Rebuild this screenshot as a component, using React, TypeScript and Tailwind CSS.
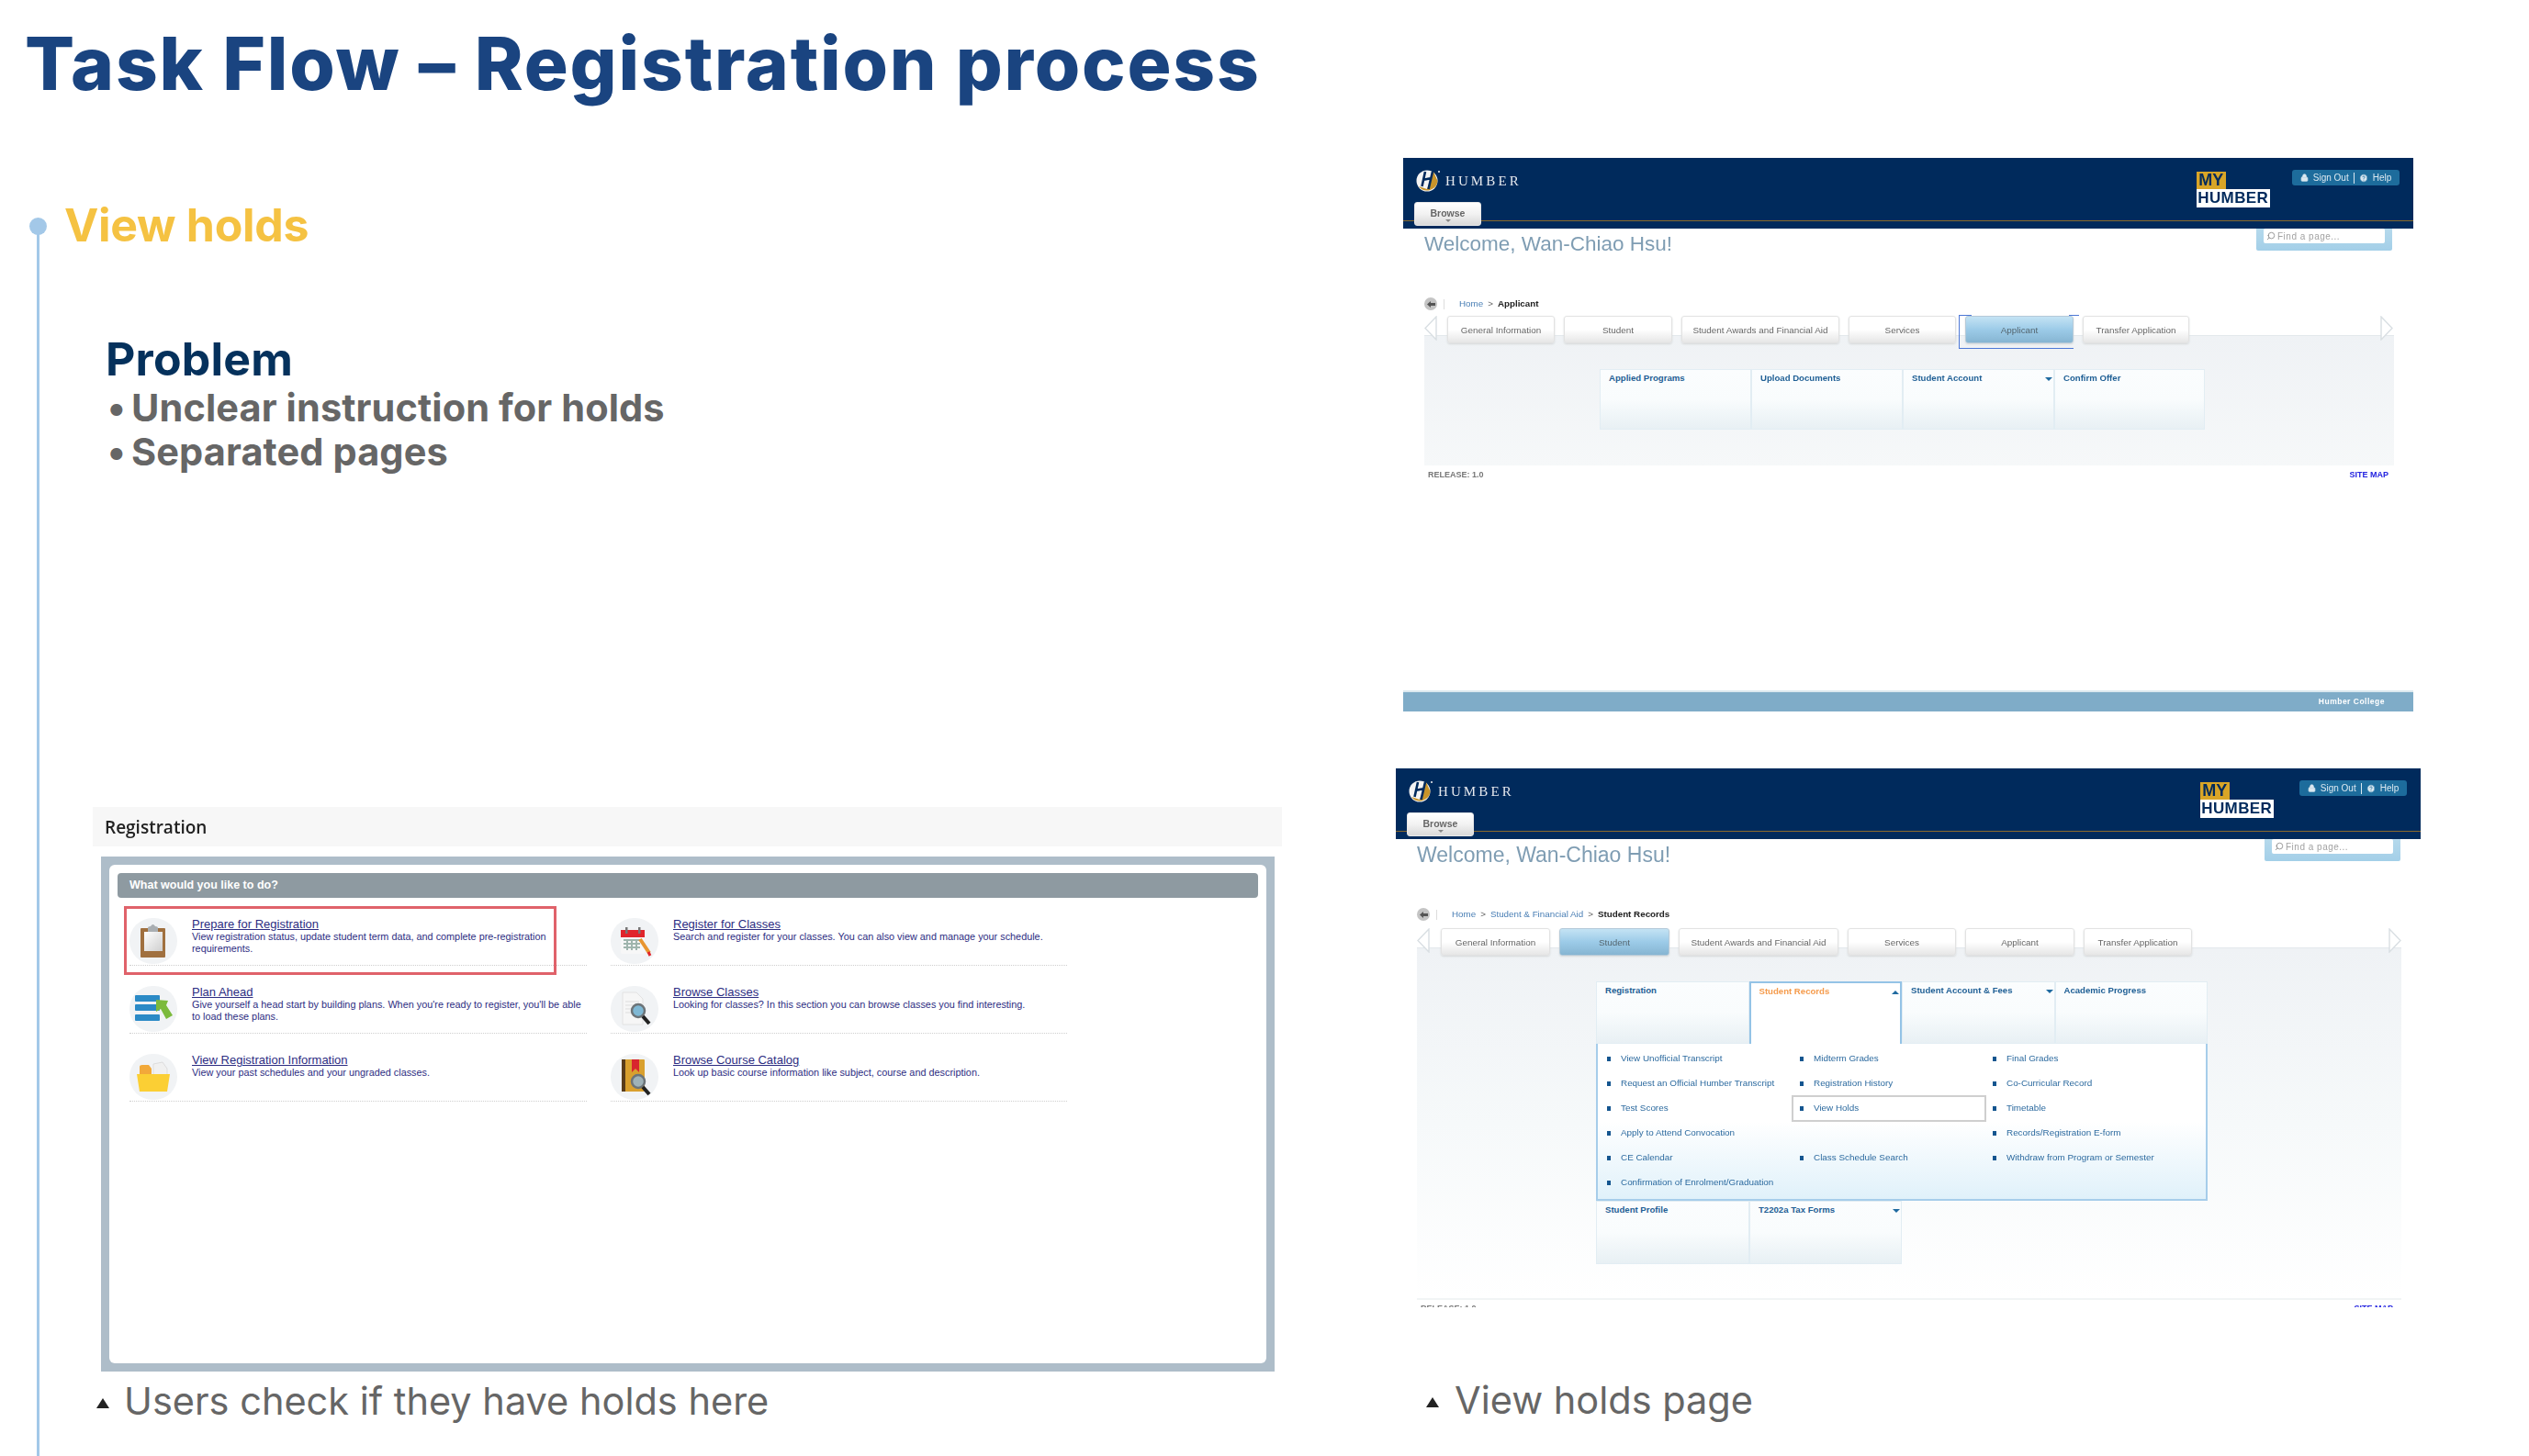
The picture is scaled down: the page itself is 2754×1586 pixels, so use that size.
import React from "react";
import { Lock, Search, CircleHelp } from "lucide-react";

const arial = "font-['Liberation_Sans',Arial,sans-serif]";
const display = "font-['Inter',sans-serif]";

function HumberLogo() {
  return (
    <svg width="26" height="26" viewBox="0 0 26 26" className="shrink-0">
      <circle cx="12" cy="13" r="11.5" fill="#f4f4f4" />
      <path d="M3 19 A11.5 11.5 0 0 0 23.5 13 L19 3 L12 22 Z" fill="#c8942a" />
      <path d="M10 3 L6.5 19 M18 3 L13.5 22 M7 12 L17 10" stroke="#002a5c" strokeWidth="2.6" fill="none" />
      <circle cx="25" cy="3" r="1" fill="#f4f4f4" />
    </svg>
  );
}

function Header({ myLeft }: { myLeft: string }) {
  return (
    <div className="relative h-[77px] bg-[#002a5c] flex flex-col">
      <div className="absolute left-0 right-0 top-[68px] h-px bg-[#8a6a2c]" />
      <div className="flex items-start h-[48px] pl-[14px] pr-[15px] pt-[12px]">
        <HumberLogo />
        <span className="ml-[6px] mt-[4px] font-['Liberation_Serif',serif] text-[15px] leading-[18px] tracking-[3.1px] text-[#e6e9ee]">HUMBER</span>
        <div className={`${myLeft} mt-[3px] flex flex-col items-start`}>
          <span className={`${arial} bg-[#d9a527] text-[#002a5c] font-bold text-[18px] leading-[19px] w-[32px] text-center`}>MY</span>
          <span className={`${arial} bg-white text-[#002a5c] font-bold text-[17px] leading-[20px] w-[80px] text-center tracking-[0.4px]`}>HUMBER</span>
        </div>
        <div className={`${arial} ml-auto mt-[1px] h-[17px] w-[117px] rounded-[3px] bg-[#1d6c9c] flex items-center justify-center gap-[5px] text-[10px] text-[#dbe8f0]`}>
          <Lock size={9} fill="#dbe8f0" strokeWidth={2} />
          <span>Sign Out</span>
          <span className="h-[12px] w-px bg-[#dbe8f0]" />
          <CircleHelp size={10} fill="#dbe8f0" stroke="#1d6c9c" />
          <span>Help</span>
        </div>
      </div>
      <div className="relative pl-[12px]">
        <div className={`${arial} w-[73px] h-[26px] rounded-[3px] bg-linear-to-b from-white via-[#f2f2f2] to-[#d9d9d9] text-[#666] text-[10.5px] font-bold flex flex-col items-center pt-[6px] leading-[11px] border border-[#e8e8e8]`}>
          Browse
          <span className="mt-[1px] w-0 h-0 border-x-[3px] border-x-transparent border-t-[3px] border-t-[#888]" />
        </div>
      </div>
    </div>
  );
}

function WelcomeRow({ pr, size }: { pr: string; size: string }) {
  return (
    <div className={`flex items-start justify-between ${pr}`}>
      <span className={`${arial} ${size} leading-[34px] text-[#7f9db3]`}>Welcome, Wan-Chiao Hsu!</span>
      <div className="w-[148px] h-[24px] bg-linear-to-b from-[#b5d9ec] to-[#a3cfe8] rounded-b-[2px] px-[8px]">
        <div className={`${arial} h-[16px] bg-white rounded-[2px] flex items-center pl-[3px] gap-[2px] text-[10px] tracking-[0.5px] text-[#a2a2a2]`}>
          <Search size={10} className="-scale-x-100" stroke="#888" />
          Find a page...
        </div>
      </div>
    </div>
  );
}

function Crumbs({ items, current }: { items: string[]; current: string }) {
  return (
    <div className={`${arial} flex items-center h-[14px] text-[9.8px]`}>
      <span className="w-[14px] h-[14px] rounded-full bg-[#c4c4c4] flex items-center justify-center">
        <svg width="9" height="7" viewBox="0 0 9 7"><path d="M0 3.5 L4 0 V2 H9 V5 H4 V7 Z" fill="#555" /></svg>
      </span>
      <span className="ml-[7px] h-[11px] w-px bg-[#ddd]" />
      <div className="ml-[16px] flex items-center gap-[5px] text-[#4a7fb5]">
        {items.map((t) => (
          <React.Fragment key={t}>
            <span>{t}</span>
            <span className="text-[#666]">&gt;</span>
          </React.Fragment>
        ))}
        <span className="font-bold text-[#222]">{current}</span>
      </div>
    </div>
  );
}

function Tab({ label, w, active, focus }: { label: string; w: string; active?: boolean; focus?: boolean }) {
  return (
    <div
      className={`${arial} relative ${w} h-[30px] pt-[2px] rounded-[3px] border text-[9.9px] flex items-center justify-center shadow-[0_1px_2px_#d5d8da] ${
        active
          ? "border-[#b5cad9] bg-linear-to-b from-[#c4e3f4] via-[#9ccbe8] to-[#86b5d2] text-[#55666f]"
          : "border-[#e2e2e2] bg-linear-to-b from-white via-white to-[#e6e6e6] text-[#666]"
      }`}
    >
      {label}
      {focus && (
        <>
          <span className="absolute left-[-8px] top-[-2px] bottom-[-7px] w-[125px] border-l border-b border-[#4d78d6]" />
          <span className="absolute left-[-8px] top-[-2px] w-[14px] h-px bg-[#4d78d6]" />
          <span className="absolute right-[-7px] top-[-2px] w-[11px] h-px bg-[#4d78d6]" />
        </>
      )}
    </div>
  );
}

function Arrow({ dir }: { dir: "l" | "r" }) {
  return (
    <svg width="14" height="27" viewBox="0 0 14 27" className="shrink-0">
      <path d={dir === "l" ? "M13 1 L1 13.5 L13 26 Z" : "M1 1 L13 13.5 L1 26 Z"} fill="#fff" stroke="#d9dfe3" strokeWidth="1.4" />
    </svg>
  );
}

function Tile({ label, caret, active }: { label: string; caret?: "down" | "up"; active?: boolean }) {
  return (
    <div
      className={`${arial} relative h-full pl-[9px] pt-[3px] text-[9.6px] leading-[11px] font-bold ${
        active
          ? "bg-white border-x-2 border-t-2 border-[#94c3e6] text-[#f59b4c]"
          : "bg-linear-to-b from-[#fbfdfe] via-[#f9fcfd] to-[#e8f0f4] border border-[#e2edf3] text-[#1f5f95]"
      }`}
    >
      {label}
      {caret === "down" && <span className="absolute right-[1px] top-[8px] w-0 h-0 border-x-[4px] border-x-transparent border-t-[4px] border-t-[#1f6aa0]" />}
      {caret === "up" && <span className="absolute right-[1px] top-[8px] w-0 h-0 border-x-[4px] border-x-transparent border-b-[4px] border-b-[#1f6aa0]" />}
    </div>
  );
}

function ScreenA() {
  const tabs: [string, string][] = [
    ["General Information", "w-[117px]"],
    ["Student", "w-[118px]"],
    ["Student Awards and Financial Aid", "w-[172px]"],
    ["Services", "w-[117px]"],
  ];
  return (
    <div className="ml-[8px] w-[1100px] blur-[0.4px]">
      <Header myLeft="ml-[735px]" />
      <div className="pl-[23px]">
        <WelcomeRow pr="pr-[23px]" size="text-[22.5px]" />
        <div className="mt-[41px]"><Crumbs items={["Home"]} current="Applicant" /></div>
        <div className="relative z-10 mt-[6px] w-[1056px] flex items-start">
          <Arrow dir="l" />
          <div className="ml-[11px] flex gap-[10px]">
            {tabs.map(([l, w]) => <Tab key={l} label={l} w={w} />)}
            <Tab label="Applicant" w="w-[118px]" active focus />
            <Tab label="Transfer Application" w="w-[116px]" />
          </div>
          <div className="ml-auto mr-[1px]"><Arrow dir="r" /></div>
        </div>
        <div className="-mt-[9px] w-[1056px] h-[142px] bg-linear-to-b from-[#eff2f5] to-[#f6f8f9] border-t border-[#e3e8ec] pt-[36px] pl-[191px]">
          <div className="grid grid-cols-[165px_165px_165px_164px] h-[66px]">
            <Tile label="Applied Programs" />
            <Tile label="Upload Documents" />
            <Tile label="Student Account" caret="down" />
            <Tile label="Confirm Offer" />
          </div>
        </div>
        <div className={`${arial} w-[1056px] flex justify-between px-[4px] mt-[5px] text-[9px] leading-[10px] font-bold`}>
          <span className="text-[#777]">RELEASE: 1.0</span>
          <span className="text-[#2323e0] mr-[2px]">SITE MAP</span>
        </div>
      </div>
      <div className={`${arial} mt-[230px] h-[23px] bg-[#7facc8] border-t-2 border-[#dbe8ef] flex items-center justify-end pr-[31px] text-[8.5px] font-bold tracking-[0.5px] text-white`}>
        Humber College
      </div>
    </div>
  );
}

function MenuItem({ label, selected }: { label?: string; selected?: boolean }) {
  if (!label) return <div className="h-[27px]" />;
  return (
    <div className={`${arial} h-[27px] pl-[8px] flex items-center text-[9.9px] text-[#2c6a9f] ${selected ? "outline-2 -outline-offset-1 outline-[#cfcfcf]" : ""}`}>
      <span className="w-[4px] h-[5px] bg-[#14558f]" />
      <span className="ml-[11px] whitespace-nowrap">{label}</span>
    </div>
  );
}

function ScreenB() {
  const tabs: [string, string, boolean?][] = [
    ["General Information", "w-[119px]"],
    ["Student", "w-[120px]", true],
    ["Student Awards and Financial Aid", "w-[174px]"],
    ["Services", "w-[118px]"],
    ["Applicant", "w-[119px]"],
    ["Transfer Application", "w-[118px]"],
  ];
  const rows: [string?, string?, string?][] = [
    ["View Unofficial Transcript", "Midterm Grades", "Final Grades"],
    ["Request an Official Humber Transcript", "Registration History", "Co-Curricular Record"],
    ["Test Scores", "View Holds", "Timetable"],
    ["Apply to Attend Convocation", undefined, "Records/Registration E-form"],
    ["CE Calendar", "Class Schedule Search", "Withdraw from Program or Semester"],
    ["Confirmation of Enrolment/Graduation", undefined, undefined],
  ];
  return (
    <div className="mt-[62px] w-[1116px] blur-[0.4px]">
      <Header myLeft="ml-[747px]" />
      <div className="pl-[23px]">
        <WelcomeRow pr="pr-[22px]" size="text-[23px]" />
        <div className="mt-[41px]"><Crumbs items={["Home", "Student & Financial Aid"]} current="Student Records" /></div>
        <div className="relative z-10 mt-[8px] w-[1072px] flex items-start">
          <Arrow dir="l" />
          <div className="ml-[12px] flex gap-[10px]">
            {tabs.map(([l, w, a]) => <Tab key={l} label={l} w={w} active={a} />)}
          </div>
          <div className="ml-auto"><Arrow dir="r" /></div>
        </div>
        <div className="-mt-[9px] w-[1072px] h-[384px] bg-linear-to-b from-[#eff2f5] via-[#f6f9fa] to-white border-t border-[#e3e8ec] border-b-2 border-b-[#f1f4f5] pt-[36px] pl-[195px]">
          <div className="w-[666px]">
            <div className="grid grid-cols-4 h-[68px]">
              <Tile label="Registration" />
              <Tile label="Student Records" caret="up" active />
              <Tile label="Student Account & Fees" caret="down" />
              <Tile label="Academic Progress" />
            </div>
            <div className="h-[171px] bg-linear-to-b from-white via-white to-[#e0f1fa] border-x-2 border-b-2 border-[#a6cdea] pl-[2px] pt-[3px] grid grid-cols-[210px_210px_240px] content-start">
              {rows.map((r, i) => (
                <React.Fragment key={i}>
                  <MenuItem label={r[0]} />
                  <MenuItem label={r[1]} selected={r[1] === "View Holds"} />
                  <MenuItem label={r[2]} />
                </React.Fragment>
              ))}
            </div>
            <div className="grid grid-cols-[167px_166px] h-[69px]">
              <Tile label="Student Profile" />
              <Tile label="T2202a Tax Forms" caret="down" />
            </div>
          </div>
        </div>
        <div className={`${arial} w-[1072px] h-[4px] overflow-hidden flex justify-between px-[4px] mt-[4px] text-[9px] leading-[10px] font-bold`}>
          <span className="text-[#777]">RELEASE: 1.0</span>
          <span className="text-[#2323e0] mr-[5px]">SITE MAP</span>
        </div>
      </div>
    </div>
  );
}

function Caption({ text, tri, gap }: { text: string; tri: string; gap: string }) {
  return (
    <div className={`${tri} flex items-center h-[48px]`}>
      <span className="mt-[4px] w-0 h-0 border-x-[7px] border-x-transparent border-b-[11px] border-b-[#222]" />
      <span className={`${gap} ${display} text-[41.5px] leading-[48px] text-[#666] whitespace-nowrap`}>{text}</span>
    </div>
  );
}

const iconBox = "w-[52px] h-[50px] shrink-0 rounded-full bg-[#f1f3f5] flex items-center justify-center";

function IconClipboard() {
  return (
    <svg width="34" height="40" viewBox="0 0 34 40">
      <defs>
        <linearGradient id="paper" x1="0" y1="0" x2="1" y2="1">
          <stop offset="0" stopColor="#ffffff" />
          <stop offset="1" stopColor="#cfcfcf" />
        </linearGradient>
      </defs>
      <rect x="3" y="6" width="27" height="32" rx="1" fill="#a0703f" />
      <rect x="7" y="10" width="20" height="21" fill="url(#paper)" />
      <path d="M11 10 L11 6 Q11 4 14 4 Q16.5 0 19 4 Q22 4 22 6 L22 10 Z" fill="#a9aeb2" />
    </svg>
  );
}
function IconCalendar() {
  return (
    <svg width="40" height="40" viewBox="0 0 40 40">
      <rect x="5" y="8" width="26" height="26" rx="2" fill="#f7f7f7" />
      <rect x="5" y="8" width="26" height="8" fill="#e0252b" />
      <rect x="10" y="5" width="2.5" height="7" fill="#777" />
      <rect x="24" y="5" width="2.5" height="7" fill="#777" />
      <path d="M8 19h18M8 23h18M8 27h18M12 18v12M17 18v12M22 18v12" stroke="#9fb5ad" strokeWidth="2" />
      <path d="M26 18 L36 33" stroke="#e89530" strokeWidth="4" />
      <path d="M35 32 L37 36" stroke="#e0252b" strokeWidth="3" />
    </svg>
  );
}
function IconPlan() {
  return (
    <svg width="44" height="36" viewBox="0 0 44 36">
      <rect x="2" y="3" width="27" height="7" rx="1" fill="#2b8ac6" />
      <rect x="2" y="13" width="27" height="7" rx="1" fill="#2b8ac6" />
      <rect x="2" y="24" width="27" height="7" rx="1" fill="#2b8ac6" />
      <path d="M25 8 L38 9 L36 14 L43 25 L36 29 L30 18 L25 21 Z" fill="#7cba3c" />
    </svg>
  );
}
function IconDoc() {
  return (
    <svg width="40" height="42" viewBox="0 0 40 42">
      <path d="M7 3 H22 L29 10 V38 H7 Z" fill="#f6f6f6" stroke="#e2e2e2" />
      <path d="M10 13h15M10 17h15M10 21h12M10 25h10" stroke="#ddd" />
      <circle cx="24" cy="23" r="7" fill="#7fb8d4" stroke="#6d7478" strokeWidth="2.5" />
      <path d="M29 29 L36 37" stroke="#222" strokeWidth="4" />
    </svg>
  );
}
function IconFolder() {
  return (
    <svg width="40" height="34" viewBox="0 0 40 34">
      <path d="M5 6 Q5 4 8 4 H15 L18 8 V16 H5 Z" fill="#f2a93a" />
      <path d="M20 3 L30 1 L35 8 L35 18 L20 18 Z" fill="#f0f0f0" stroke="#ddd" />
      <path d="M2 14 H38 L35 33 H5 Z" fill="#fbcf34" />
    </svg>
  );
}
function IconBook() {
  return (
    <svg width="40" height="44" viewBox="0 0 40 44">
      <rect x="6" y="3" width="25" height="35" rx="1" fill="#d9a02e" />
      <rect x="6" y="3" width="4" height="35" fill="#5a3d1a" />
      <path d="M17 3 H25 V17 L21 13 L17 17 Z" fill="#d8252e" />
      <circle cx="24" cy="27" r="7" fill="#9fb2b8" stroke="#6d7478" strokeWidth="2.5" />
      <path d="M29 33 L36 41" stroke="#222" strokeWidth="4" />
    </svg>
  );
}

function RegItem({ icon, title, lines }: { icon: React.ReactNode; title: string; lines: string[] }) {
  return (
    <div className={`${arial} h-[74px] pt-[22px] flex border-b border-dotted border-[#cfcfcf]`}>
      <div className={iconBox}>{icon}</div>
      <div className="ml-[16px] text-[#2d2d82] whitespace-nowrap">
        <div className="text-[13px] leading-[14px] underline">{title}</div>
        {lines.map((l) => (
          <div key={l} className="text-[10.85px] leading-[12.6px]">{l}</div>
        ))}
      </div>
    </div>
  );
}

function RegistrationPanel() {
  return (
    <div className="blur-[0.4px]">
      <div className="ml-[101px] mt-[363px] w-[1295px] h-[43px] pt-[2px] bg-[#f7f7f7] pl-[13px] flex items-center font-['Open_Sans',sans-serif] font-semibold text-[19px] text-[#222]">
        Registration
      </div>
      <div className="ml-[110px] mt-[11px] w-[1278px] h-[561px] bg-[#aebdc9] p-[9px]">
        <div className="relative h-full bg-white rounded-[6px] pt-[9px]">
          <div className={`${arial} mx-[9px] h-[27px] bg-[#8e9aa1] rounded-[4px] pl-[13px] flex items-center text-[12.5px] font-bold text-white`}>
            What would you like to do?
          </div>
          <div className="pl-[22px] grid grid-cols-[498px_497px] gap-x-[26px]">
            <RegItem icon={<IconClipboard />} title="Prepare for Registration" lines={["View registration status, update student term data, and complete pre-registration", "requirements."]} />
            <RegItem icon={<IconCalendar />} title="Register for Classes" lines={["Search and register for your classes. You can also view and manage your schedule."]} />
            <RegItem icon={<IconPlan />} title="Plan Ahead" lines={["Give yourself a head start by building plans. When you're ready to register, you'll be able", "to load these plans."]} />
            <RegItem icon={<IconDoc />} title="Browse Classes" lines={["Looking for classes? In this section you can browse classes you find interesting."]} />
            <RegItem icon={<IconFolder />} title="View Registration Information" lines={["View your past schedules and your ungraded classes."]} />
            <RegItem icon={<IconBook />} title="Browse Course Catalog" lines={["Look up basic course information like subject, course and description."]} />
          </div>
          <div className="absolute left-[16px] top-[45px] w-[471px] h-[75px] border-[3px] border-[#e0626a]" />
        </div>
      </div>
    </div>
  );
}

export default function App() {
  return (
    <div className="relative w-[2754px] h-[1586px] bg-white overflow-hidden">
      <h1 className={`${display} pl-[27px] h-[172px] pt-[21px] text-[80px] leading-[96px] font-extrabold tracking-[1.8px] text-[#1a4480] whitespace-nowrap`}>
        Task Flow – Registration process
      </h1>
      <div className="flex items-start">
        <div className="relative w-[1520px]">
          <div className="absolute left-[40px] top-[74px] w-[3px] h-[1340px] bg-[#a3c8e8]" />
          <div className="absolute left-[32px] top-[65px] w-[19px] h-[19px] rounded-full bg-[#a3c8e8]" />
          <h2 className={`${display} ml-[70px] mt-[43px] text-[50px] leading-[60px] font-bold tracking-[-0.3px] text-[#f5c242]`}>View holds</h2>
          <h3 className={`${display} ml-[115px] mt-[88px] text-[50px] leading-[56px] font-bold tracking-[0.2px] text-[#05315c]`}>Problem</h3>
          <ul className={`${display} ml-[117px] mt-[1px] text-[41.5px] leading-[48px] font-bold tracking-[0.1px] text-[#666]`}>
            <li className="flex"><span className="w-[26px]">•</span>Unclear instruction for holds</li>
            <li className="flex"><span className="w-[26px]">•</span>Separated pages</li>
          </ul>
          <RegistrationPanel />
          <div className="mt-[8px]">
            <Caption text="Users check if they have holds here" tri="ml-[105px]" gap="ml-[16px]" />
          </div>
        </div>
        <div className="w-[1116px]">
          <ScreenA />
          <ScreenB />
          <div className="mt-[77px]">
            <Caption text="View holds page" tri="ml-[33px]" gap="ml-[17px]" />
          </div>
        </div>
      </div>
    </div>
  );
}
